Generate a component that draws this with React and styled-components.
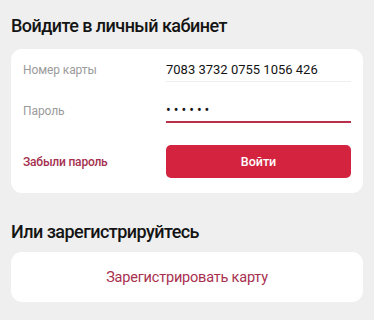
import React, { useState } from "react";
import styled, { createGlobalStyle } from "styled-components";

const GlobalStyle = createGlobalStyle`
  body {
    margin: 0;
    background: #efefef;
    font-family: Roboto, "Noto Sans", sans-serif;
    color: #141414;
  }
`;

const Page = styled.div`
  padding: 13px 11px 0;
`;

const Heading = styled.h2`
  margin: ${(p) => p.top || 0}px 0 0;
  font-size: 18px;
  font-weight: 500;
  line-height: 26px;
  letter-spacing: -0.55px;
`;

const Card = styled.div`
  background: #ffffff;
  border-radius: 11px;
  margin-top: ${(p) => p.gap || 10}px;
  padding: ${(p) => p.pad || "9px 12px 15px"};
`;

const Row = styled.div`
  display: grid;
  grid-template-columns: 143px minmax(0, 1fr);
  align-items: center;
  margin-top: ${(p) => p.top || 0}px;
`;

const Label = styled.span`
  font-size: 12px;
  letter-spacing: -0.1px;
  color: #9b9b9b;
`;

const Field = styled.input`
  box-sizing: border-box;
  width: 100%;
  min-width: 0;
  border: none;
  outline: none;
  padding: 0;
  height: 24px;
  font-family: inherit;
  font-size: ${(p) => (p.type === "password" ? "14px" : "13px")};
  color: #141414;
  background: transparent;
  border-bottom: ${(p) => (p.active ? "2px solid #b8304c" : "1px solid #eeeeee")};
  letter-spacing: ${(p) => (p.type === "password" ? "3px" : "0")};
`;

const Forgot = styled.a`
  font-size: 12px;
  font-weight: 500;
  letter-spacing: -0.2px;
  color: #a5304f;
  text-decoration: none;
`;

const SubmitButton = styled.button`
  height: 33px;
  border: none;
  border-radius: 5px;
  background: #d3233e;
  color: #ffffff;
  font-family: inherit;
  font-size: 12.5px;
  font-weight: 500;
`;

const RegisterLink = styled.a`
  display: flex;
  align-items: center;
  justify-content: center;
  height: 50px;
  font-size: 14.5px;
  letter-spacing: -0.2px;
  color: #a8304f;
  text-decoration: none;
`;

export default function App() {
  const [card, setCard] = useState("7083 3732 0755 1056 426");
  const [password, setPassword] = useState("123456");

  return (
    <>
      <GlobalStyle />
      <Page>
        <Heading>Войдите в личный кабинет</Heading>
        <Card gap={10}>
          <Row>
            <Label>Номер карты</Label>
            <Field value={card} onChange={(e) => setCard(e.target.value)} />
          </Row>
          <Row top={17}>
            <Label>Пароль</Label>
            <Field
              type="password"
              active
              value={password}
              onChange={(e) => setPassword(e.target.value)}
            />
          </Row>
          <Row top={22}>
            <Forgot href="#">Забыли пароль</Forgot>
            <SubmitButton>Войти</SubmitButton>
          </Row>
        </Card>
        <Heading top={26}>Или зарегистрируйтесь</Heading>
        <Card gap={7} pad="0">
          <RegisterLink href="#">Зарегистрировать карту</RegisterLink>
        </Card>
      </Page>
    </>
  );
}
